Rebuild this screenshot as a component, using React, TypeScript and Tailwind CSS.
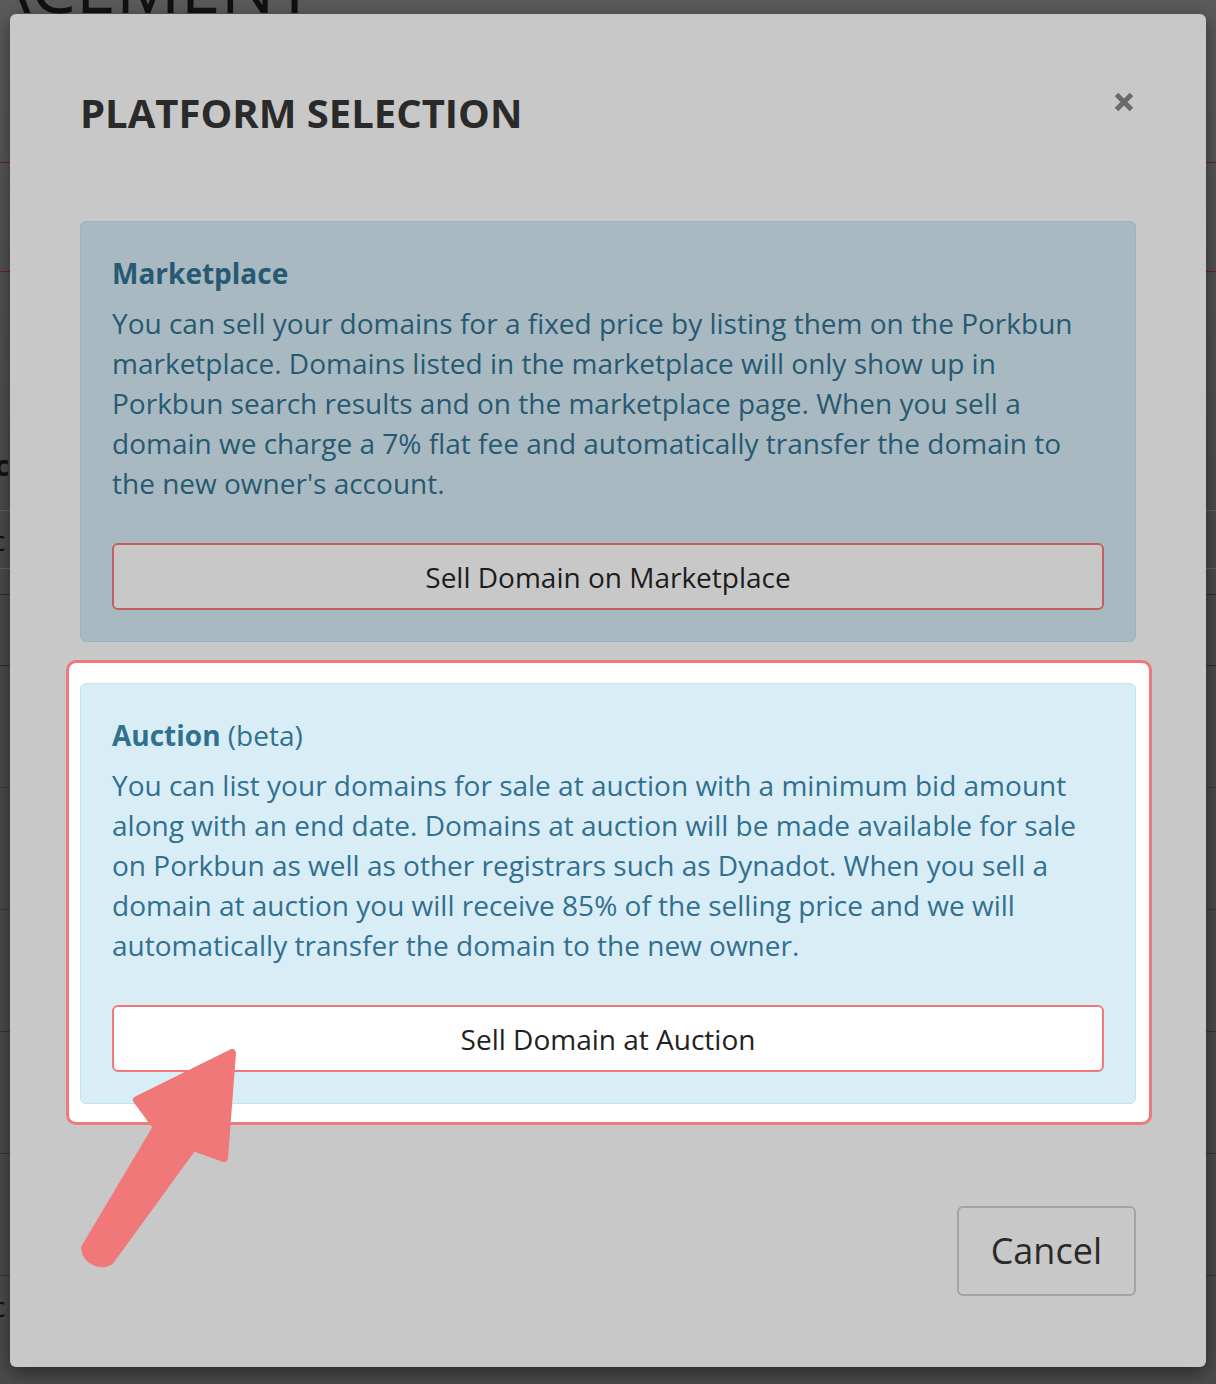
import React from "react";

const Panel = ({
  title,
  suffix,
  body,
  button,
  dim,
}: {
  title: string;
  suffix?: string;
  body: React.ReactNode;
  button: string;
  dim: boolean;
}) => {
  return (
    <div
      className={
        dim
          ? "rounded-[6px] border border-[#93b6c0] bg-[#a9b9c1] px-[31px] py-[31px] text-[#265a72]"
          : "rounded-[6px] border border-[#bce8f1] bg-[#d9edf7] px-[31px] py-[31px] text-[#31708f]"
      }
    >
      <p className="mb-[10px] text-[28px] leading-[40px]">
        <strong className="font-bold">{title}</strong>
        {suffix && <span> {suffix}</span>}
      </p>
      <p className="text-[28px] leading-[40px]">{body}</p>
      <button
        className={
          dim
            ? "mt-[40px] h-[67px] w-full rounded-[6px] border-2 border-[#c35f5f] bg-[#c8c8c8] text-[28px] text-[#1c1c1c]"
            : "mt-[40px] h-[67px] w-full rounded-[6px] border-2 border-[#f07878] bg-white text-[28px] text-[#222]"
        }
      >
        {button}
      </button>
    </div>
  );
};

const App: React.FC = () => {
  return (
    <div className="relative h-[1384px] w-[1216px] overflow-hidden bg-[linear-gradient(#5a5a5a,#4a4a4a_40%,#4b4b4b)] font-['Open_Sans',sans-serif]">
      {/* page behind the modal */}
      <div className="flex flex-col">
        <div className="h-[163px] border-b border-[#6e1f1f]">
          <div className="-ml-[96px] -mt-[51px] text-[72px] font-normal leading-none whitespace-nowrap text-[#111]">
            PLACEMENT
          </div>
        </div>
        <div className="h-[109px] border-b border-[#6e1f1f]" />
        <div className="flex h-[239px] items-end border-b border-[#646464] pb-[24px]">
          <span className="-ml-[22px] text-[28px] font-bold text-[#111]">ac</span>
        </div>
        <div className="flex h-[58px] items-center border-b border-[#646464]">
          <span className="-ml-[8px] text-[28px] text-[#111]">c</span>
        </div>
        <div className="h-[26px] border-b border-[#2e2e2e]" />
        <div className="h-[71px] border-b border-[#2e2e2e]" />
        <div className="h-[122px] border-b border-[#3a3a3a]" />
        <div className="h-[122px] border-b border-[#3a3a3a]" />
        <div className="h-[122px] border-b border-[#333]" />
        <div className="h-[122px] border-b border-[#333]" />
        <div className="h-[122px] border-b border-[#333]" />
        <div className="flex h-[60px] items-center">
          <span className="-ml-[8px] text-[28px] text-[#111]">c</span>
        </div>
      </div>

      {/* modal */}
      <div className="absolute left-[10px] top-[14px] flex w-[1196px] flex-col rounded-[6px] bg-[#c8c8c8] px-[70px] pb-[71px] pt-[75px] shadow-[0_6px_18px_rgba(0,0,0,0.45)]">
        <div className="flex items-start justify-between">
          <h2 className="text-[40px] font-bold leading-[48px] text-[#2a2a2a]">
            PLATFORM SELECTION
          </h2>
          <button className="mr-[2px] mt-[3px]">
            <svg width="20" height="20" viewBox="0 0 20 20">
              <path
                d="M2.5 2.5 L17.5 17.5 M17.5 2.5 L2.5 17.5"
                stroke="#6b6b6b"
                strokeWidth="5"
              />
            </svg>
          </button>
        </div>

        <div className="mt-[84px]">
          <Panel
            dim
            title="Marketplace"
            body={
              <>
                You can sell your domains for a fixed price by listing them on the Porkbun
                marketplace. Domains listed in the marketplace will only show up in
                Porkbun search results and on the marketplace page. When you sell a
                domain we charge a 7% flat fee and automatically transfer the domain to
                the new owner's account.
              </>
            }
            button="Sell Domain on Marketplace"
          />
        </div>

        <div className="-ml-[14px] -mr-[16px] mt-[18px] rounded-[10px] border-[3px] border-[#f07878] bg-white pb-[18px] pl-[11px] pr-[13px] pt-[20px]">
          <Panel
            dim={false}
            title="Auction"
            suffix="(beta)"
            body={
              <>
                You can list your domains for sale at auction with a minimum bid amount
                along with an end date. Domains at auction will be made available for sale
                on Porkbun as well as other registrars such as Dynadot. When you sell a
                domain at auction you will receive 85% of the selling price and we will
                automatically transfer the domain to the new owner.
              </>
            }
            button="Sell Domain at Auction"
          />
        </div>

        <div className="mt-[81px] flex justify-end">
          <button className="h-[90px] rounded-[6px] border-2 border-[#a3a3a3] px-[32px] text-[36px] text-[#2a2a2a]">
            Cancel
          </button>
        </div>
      </div>

      {/* annotation arrow */}
      <svg
        className="absolute left-[60px] top-[1030px]"
        width="200"
        height="250"
        viewBox="0 0 200 250"
      >
        <path
          d="M172 23 L164 128 L133 117 L50 231 A17 17 0 0 1 25 218 L97 97 L77 70 Z"
          fill="#f07878"
          stroke="#f07878"
          strokeWidth="8"
          strokeLinejoin="round"
        />
      </svg>
    </div>
  );
};

export default App;
